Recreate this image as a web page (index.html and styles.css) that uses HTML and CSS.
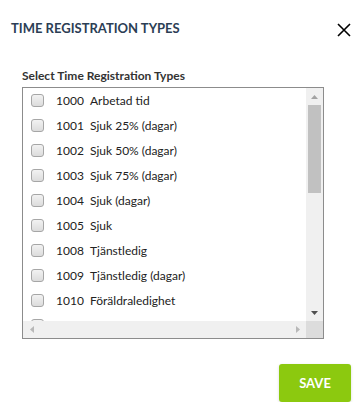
FILE: index.html
```html
<!DOCTYPE html>
<html lang="sv">
<head>
    <meta charset="UTF-8">
    <meta name="viewport" content="width=device-width, initial-scale=1.0">
    <title>Time Registration Types</title>
    <link rel="stylesheet" href="styles.css">
</head>
<body>
    <div class="dialog">
        <header class="dialog-header">
            <h2 class="dialog-title">Time Registration Types</h2>
            <button type="button" class="close-btn" aria-label="Close">
                <svg width="14" height="14" viewBox="0 0 14 14">
                    <path d="M1 1 L13 13 M13 1 L1 13" stroke="#000" stroke-width="1.6" fill="none"/>
                </svg>
            </button>
        </header>

        <!-- lista med tidregistreringstyper -->
        <section class="dialog-body">
            <div class="field-label">Select Time Registration Types</div>
            <div class="list-box">
                <div class="type-list">
                    <label class="type-item"><input type="checkbox"><span class="type-code">1000</span><span>Arbetad tid</span></label>
                    <label class="type-item"><input type="checkbox"><span class="type-code">1001</span><span>Sjuk 25% (dagar)</span></label>
                    <label class="type-item"><input type="checkbox"><span class="type-code">1002</span><span>Sjuk 50% (dagar)</span></label>
                    <label class="type-item"><input type="checkbox"><span class="type-code">1003</span><span>Sjuk 75% (dagar)</span></label>
                    <label class="type-item"><input type="checkbox"><span class="type-code">1004</span><span>Sjuk (dagar)</span></label>
                    <label class="type-item"><input type="checkbox"><span class="type-code">1005</span><span>Sjuk</span></label>
                    <label class="type-item"><input type="checkbox"><span class="type-code">1008</span><span>Tjänstledig</span></label>
                    <label class="type-item"><input type="checkbox"><span class="type-code">1009</span><span>Tjänstledig (dagar)</span></label>
                    <label class="type-item"><input type="checkbox"><span class="type-code">1010</span><span>Föräldraledighet</span></label>
                    <label class="type-item"><input type="checkbox"></label>
                </div>

                <!-- egen scrollbar -->
                <div class="vscroll">
                    <span class="sb-btn">
                        <svg width="7" height="4" viewBox="0 0 7 4"><polygon points="3.5,0 7,4 0,4" fill="#a3a3a3"/></svg>
                    </span>
                    <div class="vscroll-track"><div class="vscroll-thumb"></div></div>
                    <span class="sb-btn">
                        <svg width="7" height="4" viewBox="0 0 7 4"><polygon points="0,0 7,0 3.5,4" fill="#505050"/></svg>
                    </span>
                </div>
                <div class="hscroll">
                    <span class="sb-btn">
                        <svg width="4" height="7" viewBox="0 0 4 7"><polygon points="4,0 4,7 0,3.5" fill="#b8b8b8"/></svg>
                    </span>
                    <span class="sb-btn">
                        <svg width="4" height="7" viewBox="0 0 4 7"><polygon points="0,0 4,3.5 0,7" fill="#b8b8b8"/></svg>
                    </span>
                </div>
                <div class="sb-corner"></div>
            </div>
        </section>

        <footer class="dialog-footer">
            <button type="button" class="save-btn">SAVE</button>
        </footer>
    </div>
</body>
</html>
```

FILE: styles.css
```css
body {
    margin: 0;
    background-color: #fff;
    font-family: "Source Sans Pro", Lato, "Noto Sans", sans-serif;
    color: #333;
}

.dialog {
    width: 364px;
}

.dialog-header {
    display: flex;
    justify-content: space-between;
    align-items: center;
    padding: 19px 13px 0 11px;
}

.dialog-title {
    margin: 0;
    font-size: 13px;
    line-height: 16px;
    font-weight: bold;
    text-transform: uppercase;
    color: #2c3e55;
}

.close-btn {
    background: none;
    border: none;
    padding: 0;
    margin-top: 4px;
    width: 14px;
    height: 14px;
    cursor: pointer;
}

.close-btn svg {
    display: block;
}

.dialog-body {
    padding: 31px 0 0 22px;
}

.field-label {
    font-size: 12px;
    line-height: 15px;
    font-weight: bold;
    color: #333;
    margin-bottom: 4px;
}

.list-box {
    display: grid;
    grid-template-columns: 283px 17px;
    grid-template-rows: 233px 17px;
    width: 300px;
    border: 1px solid #8c8c8c;
}

.type-list {
    overflow: hidden;
}

.type-item {
    display: flex;
    align-items: center;
    height: 25px;
    padding-left: 8px;
    font-size: 12px;
    color: #222;
    white-space: nowrap;
}

.type-item input[type="checkbox"] {
    appearance: none;
    flex-shrink: 0;
    margin: 0 12px 0 0;
    width: 13px;
    height: 13px;
    border: 1px solid #a6a6a6;
    border-radius: 3px;
    background: linear-gradient(#f2f2f2, #dcdcdc);
}

.type-code {
    width: 34px;
}

.vscroll {
    display: flex;
    flex-direction: column;
    background-color: #f0f0f0;
}

.vscroll-track {
    flex: 1;
}

.vscroll-thumb {
    height: 88px;
    margin: 0 2px;
    background-color: #c1c1c1;
}

.hscroll {
    display: flex;
    justify-content: space-between;
    background-color: #f0f0f0;
}

.sb-btn {
    display: flex;
    align-items: center;
    justify-content: center;
    width: 17px;
    height: 17px;
}

.sb-btn svg {
    display: block;
}

.sb-corner {
    background-color: #dcdcdc;
}

.dialog-footer {
    display: flex;
    justify-content: flex-end;
    padding: 25px 13px 0 0;
}

.save-btn {
    width: 72px;
    height: 38px;
    border: none;
    border-radius: 3px;
    background-color: #8cc90f;
    color: #fff;
    font-family: inherit;
    font-size: 13px;
    font-weight: bold;
    box-shadow: 0 1px 3px rgba(0, 0, 0, 0.15);
    cursor: pointer;
}
```
